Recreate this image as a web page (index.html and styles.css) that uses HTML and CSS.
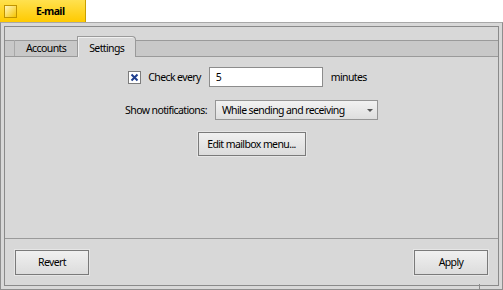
FILE: index.html
```html
<!DOCTYPE html>
<html lang="en">
<head>
    <meta charset="UTF-8">
    <title>E-mail</title>
    <link rel="stylesheet" href="styles.css">
</head>
<body>

<div class="titulo">
    <span class="cerrar"></span>
    <span class="nombre">E-mail</span>
</div>

<div class="ventana">
    <div class="interior">
        <div class="pestanas">
            <div class="pestana">Accounts</div>
            <div class="pestana activa">Settings</div>
        </div>

        <div class="contenido">
            <div class="fila">
                <label class="marca">
                    <svg class="caja" width="13" height="13" viewBox="0 0 13 13">
                        <rect x="0.5" y="0.5" width="12" height="12" fill="#fff" stroke="#7c7c7c"/>
                        <path d="M3.5 3.5 L9.5 9.5 M9.5 3.5 L3.5 9.5" stroke="#1f3f8f" stroke-width="2"/>
                    </svg>
                    Check every
                </label>
                <input type="text" class="campo" value="5">
                <span class="unidad">minutes</span>
            </div>
            <div class="fila">
                <span class="etiqueta">Show notifications:</span>
                <div class="menu">
                    <span>While sending and receiving</span>
                    <span class="flecha"></span>
                </div>
            </div>
            <div class="fila">
                <button class="boton ancho">Edit mailbox menu...</button>
            </div>
        </div>

        <div class="pie">
            <button class="boton">Revert</button>
            <button class="boton">Apply</button>
        </div>
    </div>
    <span class="esquina"></span>
</div>

</body>
</html>
```

FILE: styles.css
```css
body {
    font-family: "Noto Sans", sans-serif;
    font-size: 10.5px;
    letter-spacing: -0.6px;
    color: #000;
    margin: 0;
    padding: 0;
    background-color: #fff;
    width: 503px;
    height: 290px;
    overflow: hidden;
}
.titulo {
    width: 86px;
    height: 22px;
    background: linear-gradient(#ffe14f, #ffca00);
    border-right: 1px solid #c9a000;
    display: flex;
    align-items: center;
    box-sizing: border-box;
    padding-left: 4px;
}
.cerrar {
    width: 13px;
    height: 13px;
    box-sizing: border-box;
    border: 1px solid #c09300;
    background: linear-gradient(135deg, #fff6c0, #f5c400);
}
.nombre {
    font-weight: bold;
    margin-left: 19px;
}
.ventana {
    position: relative;
    height: 268px;
    box-sizing: border-box;
    border: 1px solid #8e8e8e;
    border-top-color: #a8a8a8;
    padding: 3px;
    background-color: #d8d8d8;
}
.interior {
    height: 100%;
    box-sizing: border-box;
    border: 1px solid #8a8a8a;
    display: flex;
    flex-direction: column;
}
.pestanas {
    height: 30px;
    display: flex;
    align-items: flex-end;
    box-sizing: border-box;
    border-bottom: 1px solid #9a9a9a;
    background: linear-gradient(#d8d8d8 13px, #9a9a9a 13px, #9a9a9a 14px, #c8c8c8 14px);
    padding-left: 9px;
}
.pestana {
    height: 16px;
    line-height: 16px;
    padding: 0 11px;
    border-left: 1px solid #a8a8a8;
}
.pestana.activa {
    height: 20px;
    line-height: 22px;
    margin-bottom: -1px;
    background-color: #d8d8d8;
    border: 1px solid #9a9a9a;
    border-bottom: none;
    border-top-right-radius: 4px;
    box-shadow: inset 1px 1px 0 #f0f0f0;
}
.contenido {
    flex: 1;
    display: flex;
    flex-direction: column;
    align-items: center;
    padding-top: 9px;
    gap: 11px;
    border-bottom: 1px solid #9a9a9a;
}
.fila {
    display: flex;
    align-items: center;
    height: 22px;
}
.marca {
    display: flex;
    align-items: center;
    margin-right: 8px;
    margin-left: -8px;
}
.caja {
    margin-right: 7px;
}
.campo {
    width: 114px;
    height: 20px;
    box-sizing: border-box;
    border: 1px solid #8c8c8c;
    font: inherit;
    letter-spacing: inherit;
    padding: 0 6px;
    margin: 0;
}
.unidad {
    margin-left: 8px;
}
.etiqueta {
    margin-right: 8px;
}
.menu {
    width: 163px;
    height: 20px;
    box-sizing: border-box;
    border: 1px solid #959595;
    background: linear-gradient(#f2f2f2, #dedede);
    display: flex;
    align-items: center;
    justify-content: space-between;
    padding: 0 4px 0 6px;
}
.flecha {
    border-left: 3px solid transparent;
    border-right: 3px solid transparent;
    border-top: 3px solid #555;
}
.boton {
    font: inherit;
    letter-spacing: inherit;
    height: 25px;
    width: 74px;
    box-sizing: border-box;
    border: 1px solid #7a7a7a;
    box-shadow: 0 0 0 1px #e6e6e6;
    background: linear-gradient(#f0f0f0, #dcdcdc);
    padding: 0;
    color: #000;
}
.boton.ancho {
    width: 108px;
    height: 24px;
    margin-top: 2px;
}
.pie {
    height: 46px;
    display: flex;
    align-items: center;
    justify-content: space-between;
    padding: 0 10px;
}
.esquina {
    position: absolute;
    right: 22px;
    bottom: -1px;
    width: 1px;
    height: 6px;
    background-color: #8a8a8a;
}
```
